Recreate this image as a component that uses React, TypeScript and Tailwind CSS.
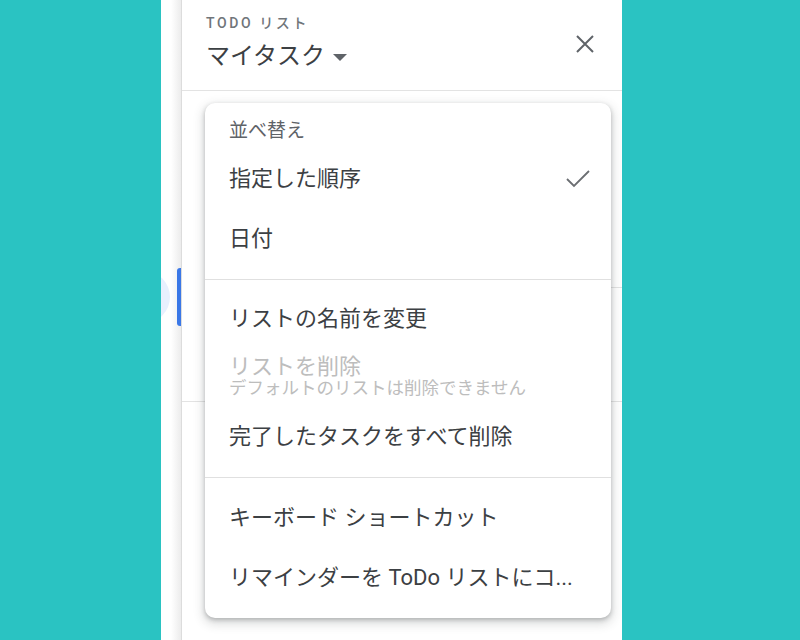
import React from "react";

const font = { fontFamily: '"Roboto", "Noto Sans CJK JP", sans-serif' };

function Item({ children, check }: { children: React.ReactNode; check?: boolean }) {
  return (
    <div className="h-[60px] flex items-center pl-6 pr-[20px] text-[22px] text-[#3c4043] leading-none whitespace-nowrap">
      <span>{children}</span>
      {check && (
        <svg className="ml-auto" width="26" height="20" viewBox="0 0 26 20" fill="none">
          <polyline points="2,10 9,17 24,2" stroke="#6b6e72" strokeWidth="1.8" strokeLinejoin="miter" />
        </svg>
      )}
    </div>
  );
}

export default function App() {
  return (
    <div className="w-[800px] h-[640px] bg-[#2ac3c2] overflow-hidden" style={font}>
      <div className="ml-[161px] w-[461px] h-[640px] bg-white flex">
        {/* left strip */}
        <div className="relative w-[21px] h-full overflow-hidden border-r border-[#dcdcdc] bg-linear-to-r from-white from-50% to-[#ececec]">
          <div className="absolute left-[-43px] top-[271px] w-[52px] h-[52px] rounded-full bg-[#e8f0fe]" />
          <div className="absolute left-[16px] top-[268px] w-[5px] h-[58px] rounded-l-[3px] bg-[#3b78e7]" />
        </div>
        {/* main */}
        <div className="relative flex-1 h-full">
          <div className="h-[91px] border-b border-[#e3e3e3] flex justify-between pl-6 pr-[25px]">
            <div className="pt-[14px]">
              <div className="text-[14px] leading-[18px] tracking-[2.6px] font-medium text-[#70757a]">TODO リスト</div>
              <div className="mt-[8px] flex items-center">
                <span className="text-[24px] leading-[32px] text-[#3c4043]">マイタスク</span>
                <span className="ml-[8px] mt-[3px] w-0 h-0 border-l-[7px] border-r-[7px] border-t-[7px] border-l-transparent border-r-transparent border-t-[#5f6368]" />
              </div>
            </div>
            <svg className="mt-[32px]" width="24" height="24" viewBox="0 0 24 24" fill="none">
              <path d="M4 4L20 20M20 4L4 20" stroke="#5f6368" strokeWidth="2" />
            </svg>
          </div>
          <div className="h-[197px] border-b border-[#e3e3e3] ml-[48px]" />
          <div className="h-[114px] border-b border-[#e3e3e3]" />

          {/* menu */}
          <div className="absolute left-[23px] top-[103px] w-[406px] bg-white rounded-[10px] shadow-[0_4px_10px_3px_rgba(60,64,67,0.15),0_2px_4px_rgba(60,64,67,0.3)]">
            <div className="pt-2 pb-[10px]">
              <div className="h-[38px] flex items-center pl-6 text-[19px] leading-none text-[#5f6368]">並べ替え</div>
              <Item check>指定した順序</Item>
              <Item>日付</Item>
            </div>
            <div className="h-px bg-[#e0e0e0]" />
            <div className="pt-[9px] pb-[10px]">
              <Item>リストの名前を変更</Item>
              <div className="h-[58px] pl-6 pt-[5px] text-[#bdbdbd] whitespace-nowrap">
                <div className="text-[22px] leading-[26px]">リストを削除</div>
                <div className="text-[17.5px] leading-[16px]">デフォルトのリストは削除できません</div>
              </div>
              <Item>完了したタスクをすべて削除</Item>
            </div>
            <div className="h-px bg-[#e0e0e0]" />
            <div className="pt-[10px] pb-[10px]">
              <Item>キーボード ショートカット</Item>
              <Item>リマインダーを ToDo リストにコ...</Item>
            </div>
          </div>
        </div>
      </div>
    </div>
  );
}
